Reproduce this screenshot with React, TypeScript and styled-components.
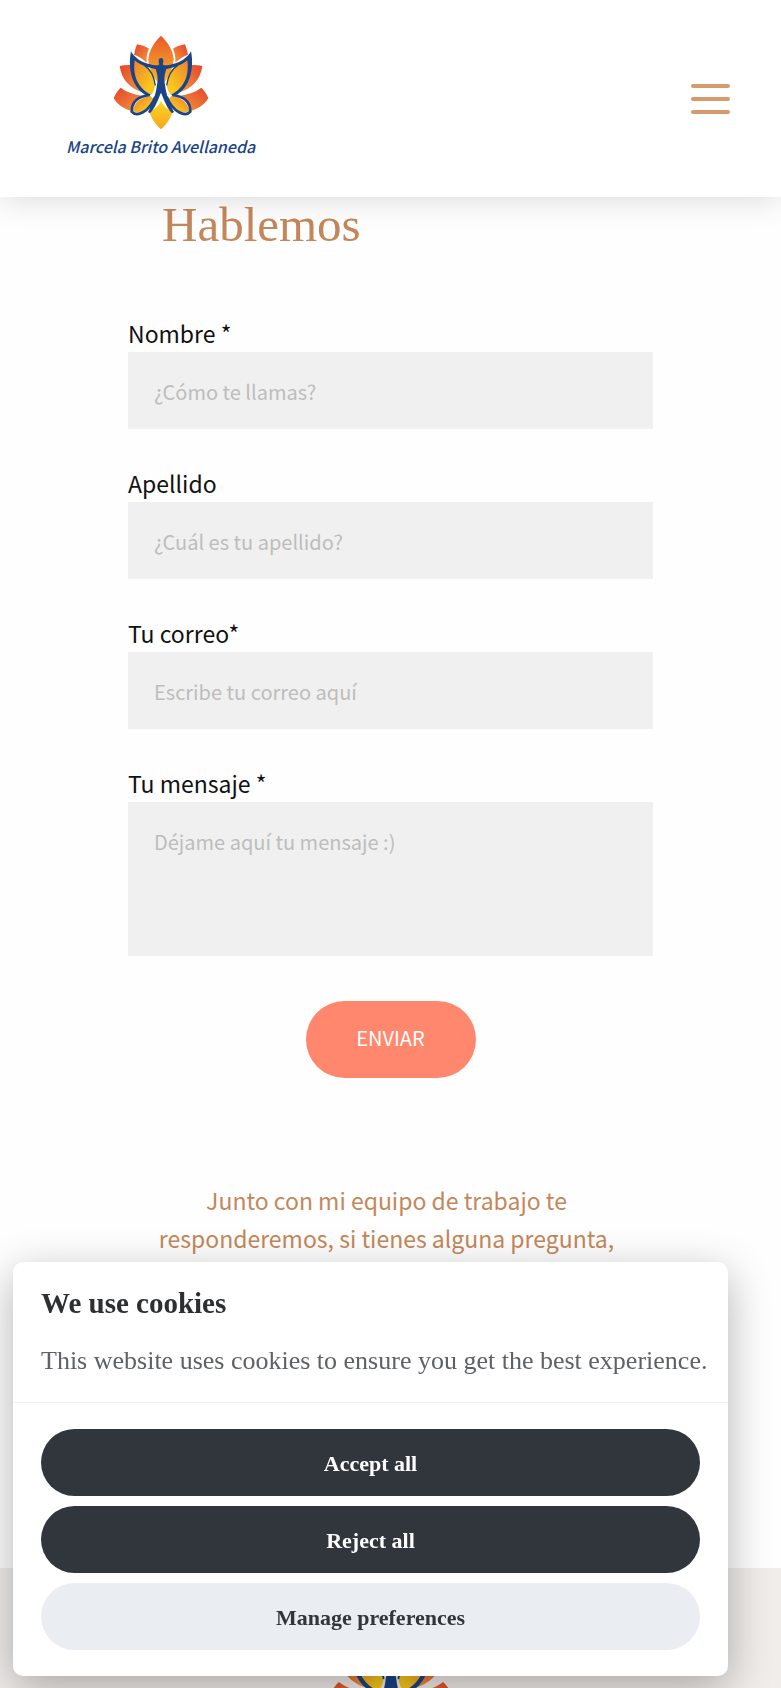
import React, {useState} from 'react';
import styled, {createGlobalStyle} from 'styled-components';

const sans = `'Noto Sans CJK SC', 'Noto Sans', sans-serif`;
const serif = `'Liberation Serif', serif`;

const fields = [
  {id: 'nombre', label: 'Nombre *', placeholder: '¿Cómo te llamas?', type: 'text'},
  {id: 'apellido', label: 'Apellido', placeholder: '¿Cuál es tu apellido?', type: 'text'},
  {id: 'correo', label: 'Tu correo*', placeholder: 'Escribe tu correo aquí', type: 'email'},
];

/**
 * Left half of the lotus, mirrored for the right one.
 */
function LotusHalf({id}: {id: string}) {
  return (
    <>
      <path d="M264 73 C276 75 289 79 300 86 C294 98 292 112 293 128 C280 116 268 108 255 104 C257 93 260 83 264 73Z" fill={`url(#${id}-red)`} />
      <path d="M212 138 C223 135 235 134 248 135 C246 164 255 193 278 216 C245 206 218 181 212 138Z" fill={`url(#${id}-red)`} />
      <path d="M215 203 C232 216 255 224 282 228 C259 235 247 250 245 272 C221 265 204 252 194 234 C199 222 206 211 215 203Z" fill={`url(#${id}-red)`} />
      <path d="M252 112 C275 128 300 138 311 160 C322 185 321 205 308 223 C270 216 248 175 252 112Z" fill={`url(#${id}-gold)`} />
      <path d="M304 228 C275 232 254 248 252 273 C270 286 298 268 313 236Z" fill={`url(#${id}-gold)`} />
      <path d="M246 94 C256 114 280 128 303 133 C314 136 324 137 336 139 L336 150 C310 146 275 139 257 121 C251 163 264 204 306 224 L298 229 C255 213 234 154 246 94Z" fill="#1b4486" />
      <path d="M302 225 C266 229 248 246 248 275 C263 292 299 278 319 230" fill="none" stroke="#1b4486" strokeWidth="8" />
      <path d="M286 136 C307 149 315 169 319 196" fill="none" stroke="#1b4486" strokeWidth="4" />
    </>
  );
}

function Lotus({id}: {id: string}) {
  return (
    <LotusSvg viewBox="192 45 288 285" aria-hidden="true">
      <defs>
        <linearGradient id={`${id}-red`} x1="0" y1="0" x2="1" y2="1">
          <stop offset="0" stopColor="#e5432c" />
          <stop offset="1" stopColor="#f39a3c" />
        </linearGradient>
        <linearGradient id={`${id}-gold`} x1="0" y1="0" x2="1" y2="1">
          <stop offset="0" stopColor="#ec7a31" />
          <stop offset="0.8" stopColor="#fbc91c" />
        </linearGradient>
        <linearGradient id={`${id}-top`} x1="0" y1="0" x2="0" y2="1">
          <stop offset="0" stopColor="#e95a2b" />
          <stop offset="1" stopColor="#f9bd2c" />
        </linearGradient>
        <linearGradient id={`${id}-low`} x1="0" y1="0" x2="0" y2="1">
          <stop offset="0" stopColor="#fbd71d" />
          <stop offset="1" stopColor="#f5a623" />
        </linearGradient>
      </defs>
      <path d="M336 47 C357 67 372 91 374 118 C372 148 358 176 336 199 C314 176 300 148 298 118 C300 91 315 67 336 47Z" fill={`url(#${id}-top)`} />
      <LotusHalf id={id} />
      <g transform="translate(672 0) scale(-1 1)">
        <LotusHalf id={id} />
      </g>
      <path d="M336 243 C344 259 355 267 371 274 C365 296 352 314 336 328 C320 314 307 296 301 274 C317 267 328 259 336 243Z" fill={`url(#${id}-low)`} />
      <ellipse cx="336" cy="124" rx="7" ry="10" fill="#1b4486" />
      <path d="M318 137 C326 138 330 136 332 130 L340 130 C342 136 346 138 354 137 L350 154 C345 170 345 184 348 194 C351 223 362 251 375 276 L369 280 C352 262 345 238 336 218 C327 238 320 262 303 280 L297 276 C310 251 321 223 324 194 C327 184 327 170 322 154Z" fill="#1b4486" />
    </LotusSvg>
  );
}

function App() {
  const [showCookies, setShowCookies] = useState<boolean>(true);

  const closeCookies = () => setShowCookies(false);

  return (
    <Page>
      <GlobalStyle />
      <Header>
        <Brand href="#">
          <HeaderLotus>
            <Lotus id="header" />
          </HeaderLotus>
          <BrandName>Marcela Brito Avellaneda</BrandName>
        </Brand>
        <MenuButton type="button" aria-label="Menú">
          <MenuLine />
          <MenuLine />
          <MenuLine />
        </MenuButton>
      </Header>

      <Main>
        <Title>Hablemos</Title>
        <Form onSubmit={(e) => e.preventDefault()}>
          {fields.map((f) => (
            <Field key={f.id}>
              <Label htmlFor={f.id}>{f.label}</Label>
              <TextInput id={f.id} type={f.type} placeholder={f.placeholder} />
            </Field>
          ))}
          <Field>
            <Label htmlFor="mensaje">Tu mensaje *</Label>
            <TextArea id="mensaje" placeholder="Déjame aquí tu mensaje :)" />
          </Field>
          <SubmitButton type="submit">ENVIAR</SubmitButton>
        </Form>
        <Note>Junto con mi equipo de trabajo te responderemos, si tienes alguna pregunta,</Note>
      </Main>

      <Footer>
        <FooterLotus>
          <Lotus id="footer" />
        </FooterLotus>
      </Footer>

      {showCookies && (
        <CookiePanel role="dialog" aria-labelledby="cookie-title">
          <CookieText>
            <CookieTitle id="cookie-title">We use cookies</CookieTitle>
            <CookieBody>This website uses cookies to ensure you get the best experience.</CookieBody>
          </CookieText>
          <CookieActions>
            <CookieButton type="button" onClick={closeCookies}>
              Accept all
            </CookieButton>
            <CookieButton type="button" onClick={closeCookies}>
              Reject all
            </CookieButton>
            <CookieButton type="button" $light>
              Manage preferences
            </CookieButton>
          </CookieActions>
        </CookiePanel>
      )}
    </Page>
  );
}

const GlobalStyle = createGlobalStyle`
  * {
    box-sizing: border-box;
  }

  body {
    margin: 0;
    background: #fefefe;
    font-family: ${sans};
  }
`;

const Page = styled.div`
  display: flex;
  flex-direction: column;
  min-height: 100vh;
`;

const Header = styled.header`
  display: flex;
  justify-content: space-between;
  align-items: center;

  z-index: 1;
  position: sticky;
  top: 0;
  height: 197px;
  padding: 0 51px 0 66px;

  background: #ffffff;
  box-shadow: 0 0 32px rgba(0, 0, 0, 0.16);
`;

const Brand = styled.a`
  display: flex;
  flex-direction: column;
  align-items: center;

  color: #1b4486;
  text-decoration: none;
`;

const LotusSvg = styled.svg`
  display: block;
  width: 100%;
`;

const HeaderLotus = styled.div`
  width: 96px;
`;

const BrandName = styled.span`
  font-size: 16px;
  font-style: italic;
  font-weight: 500;
  line-height: 32px;
  white-space: nowrap;
`;

const MenuButton = styled.button`
  display: flex;
  flex-direction: column;
  gap: 9px;

  padding: 0;
  border: none;
  background: none;
`;

const MenuLine = styled.span`
  width: 39px;
  height: 4px;
  border-radius: 2px;
  background: #d69a6c;
`;

const Main = styled.main`
  display: flex;
  flex-direction: column;

  width: 100%;
  max-width: 525px;
  margin: 0 auto;
`;

const Title = styled.h1`
  margin: 0 0 63px;
  padding-left: 34px;

  color: #c4875a;
  font-family: ${serif};
  font-size: 49px;
  font-weight: normal;
  line-height: 56px;
`;

const Form = styled.form`
  display: flex;
  flex-direction: column;
  gap: 37px;
`;

const Field = styled.div`
  display: flex;
  flex-direction: column;
`;

const Label = styled.label`
  padding-bottom: 2px;
  color: #111111;
  font-size: 23px;
  line-height: 34px;
`;

const TextInput = styled.input`
  height: 77px;
  padding: 2px 26px 0;
  border: none;
  border-radius: 0;
  outline: none;
  background: #f0f0f0;
  font-family: inherit;
  font-size: 20px;

  &::placeholder {
    color: #bdbdbd;
  }
`;

const TextArea = styled(TextInput).attrs({as: 'textarea'})`
  height: 154px;
  padding: 24px 26px;
  line-height: 32px;
  resize: none;
`;

const SubmitButton = styled.button`
  align-self: center;

  width: 170px;
  height: 77px;
  margin-top: 8px;
  padding: 0 0 4px;
  border: none;
  border-radius: 39px;
  background: #ff876d;
  color: #ffffff;
  font-family: inherit;
  font-size: 20px;
`;

const Note = styled.p`
  margin: 103px 34px 0 26px;

  color: #c4875a;
  font-size: 23px;
  line-height: 38px;
  text-align: center;
`;

const Footer = styled.footer`
  display: flex;
  justify-content: center;

  height: 120px;
  margin-top: auto;
  padding-top: 46px;
  overflow: hidden;
  background: #f1edea;
`;

const FooterLotus = styled.div`
  width: 124px;
`;

const CookiePanel = styled.section`
  z-index: 2;
  position: fixed;
  left: 13px;
  bottom: 12px;
  width: 715px;
  max-width: calc(100% - 26px);

  border-radius: 10px;
  background: #ffffff;
  box-shadow: 0 12px 44px rgba(2, 2, 3, 0.3);
  color: #2d2f31;
  font-family: ${serif};
`;

const CookieText = styled.div`
  padding: 24px 16px 24px 28px;
  border-bottom: 1px solid #f0f2f3;
`;

const CookieTitle = styled.h2`
  margin: 0 0 24px;
  font-size: 29px;
  line-height: 34px;
`;

const CookieBody = styled.p`
  margin: 0;
  color: #5e6266;
  font-size: 26px;
  line-height: 34px;
`;

const CookieActions = styled.div`
  display: flex;
  flex-direction: column;
  gap: 10px;
  padding: 26px 28px;
`;

const CookieButton = styled.button<{$light?: boolean}>`
  height: 67px;
  padding: 2px 24px 0;
  border: none;
  border-radius: 34px;
  background: ${({$light}) => ($light ? '#eaeef2' : '#30363c')};
  color: ${({$light}) => ($light ? '#30363c' : '#ffffff')};
  font-family: inherit;
  font-size: 22px;
  font-weight: bold;
`;

export default App;
